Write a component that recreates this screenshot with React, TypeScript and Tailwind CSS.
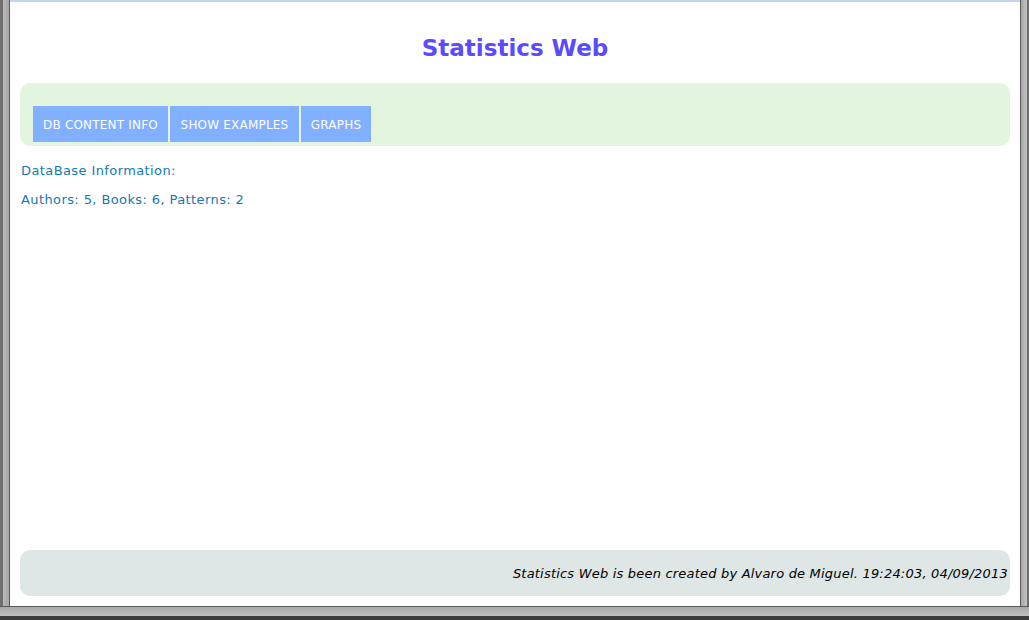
export default function App() {
  return (
    <div className="flex h-[620px] w-[1029px] flex-col overflow-hidden bg-[#3c3c3c] font-['DejaVu_Sans',sans-serif]">
      <div className="flex flex-1">
        {/* left window edge */}
        <div className="flex w-[10px]">
          <div className="w-[3px] bg-[#6e6e6e]" />
          <div className="w-[6px] bg-gradient-to-r from-[#b8b8b8] to-[#a6a6a6]" />
          <div className="w-[1px] bg-[#5a5a5a]" />
        </div>

        <div className="flex flex-1 flex-col bg-white">
          <div className="h-[2px] bg-[#c3d5ef]" />
          <div className="flex flex-1 flex-col px-[10px] pb-[10px]">
            <h1 className="pt-[30px] text-center text-[23px] leading-[32px] font-bold text-[#5b4bff]">
              Statistics Web
            </h1>

            <div className="mt-[19px] flex h-[63px] items-end rounded-[10px] bg-[#e3f5df] px-[13px] pb-[4px]">
              <div className="flex gap-[2px]">
                <button className="h-[36px] w-[135px] bg-[#80b0ff] pt-[1px] text-[12px] tracking-[0.2px] text-white">
                  DB CONTENT INFO
                </button>
                <button className="h-[36px] w-[129px] bg-[#80b0ff] pt-[1px] text-[12px] tracking-[0.2px] text-white">
                  SHOW EXAMPLES
                </button>
                <button className="h-[36px] w-[70px] bg-[#80b0ff] pt-[1px] text-[12px] tracking-[0.2px] text-white">
                  GRAPHS
                </button>
              </div>
            </div>

            <div className="px-[1px] pt-[17px] text-[13px] leading-[16px] tracking-[0.4px] text-[#1578b4]">
              <p>DataBase Information:</p>
              <p className="mt-[13px]">Authors: 5, Books: 6, Patterns: 2</p>
            </div>

            <div className="mt-auto flex h-[46px] items-center justify-end rounded-[10px] bg-[#dfe7e6] px-[2px] pt-[1px]">
              <p className="text-[13px] tracking-[0.2px] text-black italic">
                Statistics Web is been created by Alvaro de Miguel. 19:24:03, 04/09/2013
              </p>
            </div>
          </div>
        </div>

        {/* right window edge */}
        <div className="flex w-[9px]">
          <div className="w-[1px] bg-[#5a5a5a]" />
          <div className="w-[6px] bg-gradient-to-r from-[#a6a6a6] to-[#c4c4c4]" />
          <div className="w-[2px] bg-[#6e6e6e]" />
        </div>
      </div>
      {/* bottom window edge */}
      <div className="flex h-[14px] flex-col">
        <div className="h-[1px] bg-[#5a5a5a]" />
        <div className="h-[9px] bg-gradient-to-b from-[#a8a8a8] to-[#c0c0c0]" />
        <div className="h-[4px] bg-[#3c3c3c]" />
      </div>
    </div>
  )
}
